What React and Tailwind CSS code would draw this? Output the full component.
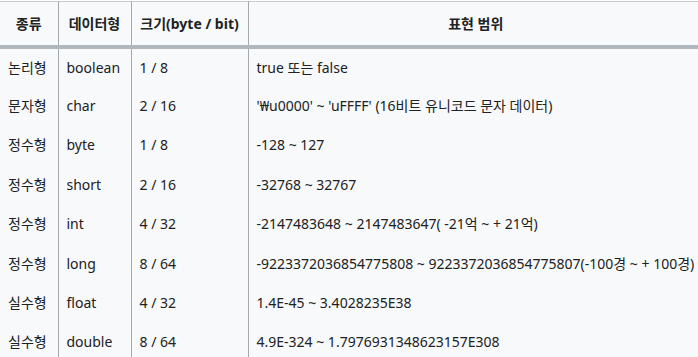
import React from 'react';

const rows = [
  ['논리형', 'boolean', '1 / 8', 'true 또는 false'],
  ['문자형', 'char', '2 / 16', "'₩u0000' ~ 'uFFFF' (16비트 유니코드 문자 데이터)"],
  ['정수형', 'byte', '1 / 8', '-128 ~ 127'],
  ['정수형', 'short', '2 / 16', '-32768 ~ 32767'],
  ['정수형', 'int', '4 / 32', '-2147483648 ~ 2147483647( -21억 ~ + 21억)'],
  ['정수형', 'long', '8 / 64', '-9223372036854775808 ~ 9223372036854775807(-100경 ~ + 100경)'],
  ['실수형', 'float', '4 / 32', '1.4E-45 ~ 3.4028235E38'],
  ['실수형', 'double', '8 / 64', '4.9E-324 ~ 1.7976931348623157E308'],
];

export default function App() {
  return (
    <div
      className="w-[698px] h-[357px] overflow-hidden bg-white pt-px text-[14px] text-[#202122]"
      style={{ fontFamily: '"Noto Sans", "Noto Sans CJK KR", sans-serif' }}
    >
      <table className="w-[703px] table-fixed border-collapse bg-[#f8f9fa]">
        <colgroup>
          <col className="w-[58px]" />
          <col className="w-[73px]" />
          <col className="w-[117px]" />
          <col />
        </colgroup>
        <thead>
          <tr className="h-[45px] border-t border-[#c8ccd1] border-b-4 border-b-[#b0b7bd]">
            {['종류', '데이터형', '크기(byte / bit)', '표현 범위'].map((h, i) => (
              <th
                key={h}
                className={`px-2 text-center font-bold whitespace-nowrap ${i < 3 ? 'border-r border-[#a2a9b1]' : ''}`}
              >
                {h}
              </th>
            ))}
          </tr>
        </thead>
        <tbody>
          {rows.map((r, ri) => (
            <tr key={ri} className="h-[39.4px]">
              {r.map((c, i) => (
                <td
                  key={i}
                  className={`px-2 text-left whitespace-nowrap ${i < 3 ? 'border-r border-[#a2a9b1]' : ''}`}
                >
                  {c}
                </td>
              ))}
            </tr>
          ))}
        </tbody>
      </table>
    </div>
  );
}
